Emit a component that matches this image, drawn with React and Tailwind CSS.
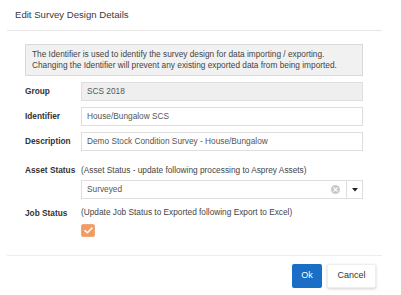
export default function App() {
  return (
    <div className="w-[401px] h-[295px] bg-white overflow-hidden font-['Liberation_Sans',Arial,sans-serif] text-[#333]">
      <div className="ml-[7px] w-[375px]">
        <div className="h-[31px] border-b border-[#e6e6e6] flex items-center pl-[8px] text-[9.6px] text-[#3a3a3a]">
          Edit Survey Design Details
        </div>
        <div className="pl-[18px] pr-[19px] pt-[13px]">
          <div className="border border-[#d8d8d8] bg-[#f1f1f1] px-[6px] py-[4px] text-[8.3px] leading-[11px] text-[#444]">
            <div>The Identifier is used to identify the survey design for data importing / exporting.</div>
            <div>Changing the Identifier will prevent any existing exported data from being imported.</div>
          </div>

          <div className="mt-[6px] flex items-center h-[19px]">
            <div className="w-[56px] text-[8.3px] font-bold text-[#333]">Group</div>
            <div className="flex-1 h-[19px] border border-[#dedede] bg-[#efefef] px-[5px] flex items-center text-[8.3px] text-[#555]">
              SCS 2018
            </div>
          </div>
          <div className="mt-[6px] flex items-center h-[19px]">
            <div className="w-[56px] text-[8.3px] font-bold text-[#333]">Identifier</div>
            <div className="flex-1 h-[19px] border border-[#dedede] bg-white px-[5px] flex items-center text-[8.3px] text-[#555]">
              House/Bungalow SCS
            </div>
          </div>
          <div className="mt-[6px] flex items-center h-[19px]">
            <div className="w-[56px] text-[8.3px] font-bold text-[#333]">Description</div>
            <div className="flex-1 h-[19px] border border-[#dedede] bg-white px-[5px] flex items-center text-[8.3px] text-[#555]">
              Demo Stock Condition Survey - House/Bungalow
            </div>
          </div>

          <div className="mt-[14px] flex items-center h-[11px]">
            <div className="w-[56px] text-[8.3px] font-bold text-[#333]">Asset Status</div>
            <div className="text-[8.3px] text-[#444]">(Asset Status - update following processing to Asprey Assets)</div>
          </div>
          <div className="mt-[4px] ml-[56px] h-[19px] border border-[#dedede] bg-white flex items-center">
            <div className="flex-1 px-[5px] text-[8.3px] text-[#555]">Surveyed</div>
            <svg width="9" height="9" viewBox="0 0 10 10" className="mr-[6px]">
              <circle cx="5" cy="5" r="5" fill="#c9c9c9" />
              <path d="M3.2 3.2 L6.8 6.8 M6.8 3.2 L3.2 6.8" stroke="#fff" strokeWidth="1.3" strokeLinecap="round" />
            </svg>
            <div className="w-[16px] h-full border-l border-[#dedede] flex items-center justify-center">
              <svg width="6" height="4" viewBox="0 0 6 4">
                <path d="M0 0 L6 0 L3 3.5 Z" fill="#222" />
              </svg>
            </div>
          </div>

          <div className="mt-[9px] flex items-center h-[11px]">
            <div className="w-[56px] text-[8.3px] font-bold text-[#333]">Job Status</div>
            <div className="text-[8.3px] text-[#444] -mt-[2px]">(Update Job Status to Exported following Export to Excel)</div>
          </div>
          <div className="mt-[5px] ml-[56px] w-[14px] h-[13px] rounded-[2px] bg-[#f39b62] border border-[#f0a878] flex items-center justify-center">
            <svg width="9" height="7" viewBox="0 0 9 7">
              <path d="M1 3.6 L3.4 5.8 L8 1" stroke="#fff" strokeWidth="1.5" fill="none" strokeLinecap="round" strokeLinejoin="round" />
            </svg>
          </div>
        </div>

        <div className="mt-[18px] border-t border-[#ececec] pt-[8px] pr-[6px] flex justify-end gap-[5px]">
          <div className="w-[30px] h-[24px] rounded-[2px] bg-[#1b6ec5] text-white text-[9px] flex items-center justify-center">Ok</div>
          <div className="w-[49px] h-[24px] rounded-[2px] bg-white border border-[#eee] shadow-[0_1px_3px_rgba(0,0,0,0.18)] text-[#333] text-[9px] flex items-center justify-center">Cancel</div>
        </div>
      </div>
    </div>
  );
}
